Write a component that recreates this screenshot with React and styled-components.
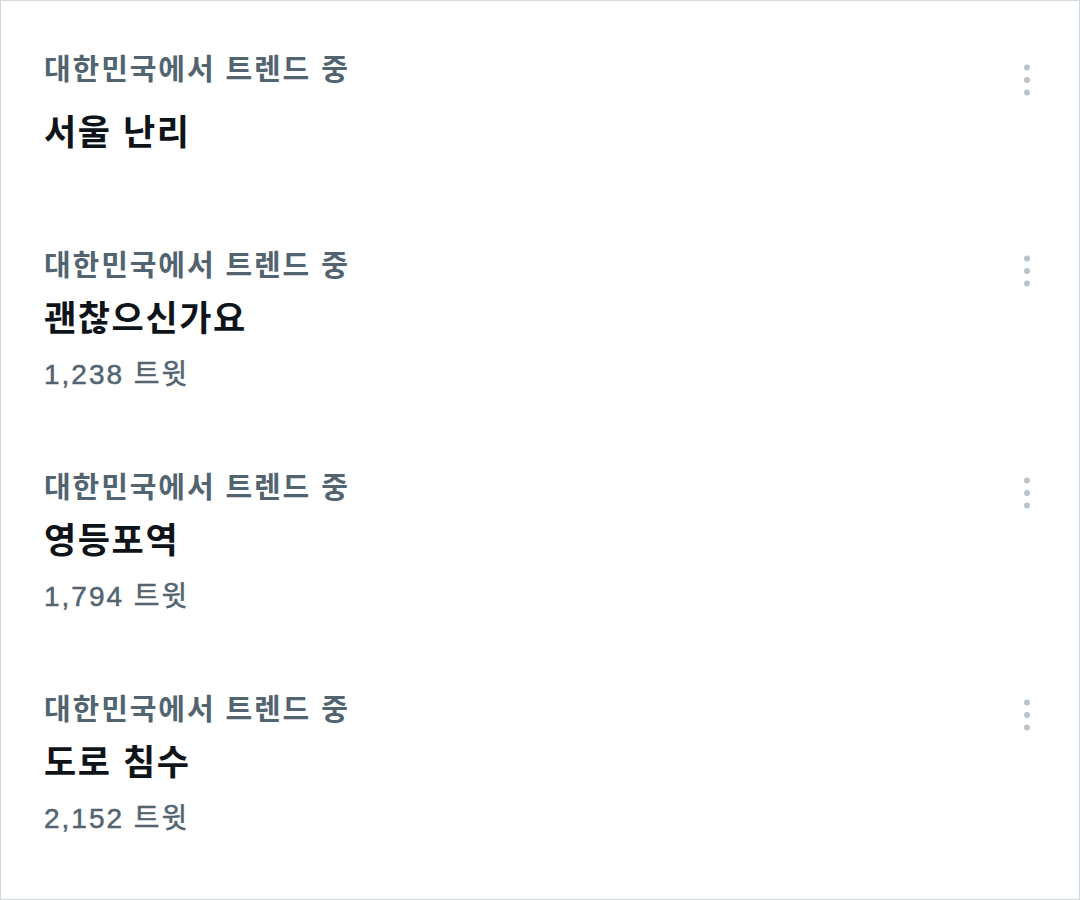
import React from 'react'
import styled, { createGlobalStyle } from 'styled-components'

const GlobalStyle = createGlobalStyle`
  body {
    margin: 0;
    background: #ffffff;
    font-family: "Liberation Sans", "Noto Sans CJK KR", sans-serif;
  }
`

const Frame = styled.div`
  box-sizing: border-box;
  width: 1080px;
  height: 900px;
  border: 1px solid #cfd9de;
  padding: 49px 43px 0 43px;
  background: #ffffff;
`

const List = styled.div`
  display: flex;
  flex-direction: column;
  gap: 69px;
`

const Item = styled.div`
  display: flex;
  flex-direction: column;
`

const HeaderRow = styled.div`
  display: flex;
  align-items: flex-start;
  justify-content: space-between;
`

const Context = styled.span`
  font-size: 29px;
  line-height: 40px;
  font-weight: 700;
  letter-spacing: 1.9px;
  color: #536471;
`

const MoreButton = styled.button`
  border: 0;
  background: none;
  padding: 0;
  margin: ${p => (p.$offset ? '14px' : '9px')} 5px 0 0;
  width: 8px;
  height: 32px;
  display: flex;
  cursor: pointer;
`

const Title = styled.div`
  font-size: 35px;
  line-height: 64px;
  font-weight: 700;
  letter-spacing: 1.6px;
  color: #0f1419;
  margin-top: ${p => (p.$solo ? '5px' : '0')};
  margin-bottom: ${p => (p.$solo ? '12px' : '0')};
`

const Count = styled.div`
  font-size: 28px;
  line-height: 48px;
  font-weight: 400;
  letter-spacing: 2px;
  color: #536471;
  -webkit-text-stroke: 0.5px #536471;
`

const MoreIcon = () => (
  <svg width="8" height="32" viewBox="0 0 8 32">
    <circle cx="4" cy="3.5" r="3" fill="#b8c3cb" />
    <circle cx="4" cy="16" r="3" fill="#b8c3cb" />
    <circle cx="4" cy="28.5" r="3" fill="#b8c3cb" />
  </svg>
)

const trends = [
  { title: '서울 난리' },
  { title: '괜찮으신가요', count: '1,238 트윗' },
  { title: '영등포역', count: '1,794 트윗' },
  { title: '도로 침수', count: '2,152 트윗' },
]

const App = () => {
  return (
    <>
      <GlobalStyle />
      <Frame>
        <List>
          {trends.map((t, i) => (
            <Item key={i}>
              <HeaderRow>
                <Context>대한민국에서 트렌드 중</Context>
                <MoreButton $offset={!t.count} aria-label="더 보기">
                  <MoreIcon />
                </MoreButton>
              </HeaderRow>
              <Title $solo={!t.count}>{t.title}</Title>
              {t.count && <Count>{t.count}</Count>}
            </Item>
          ))}
        </List>
      </Frame>
    </>
  )
}

export default App
